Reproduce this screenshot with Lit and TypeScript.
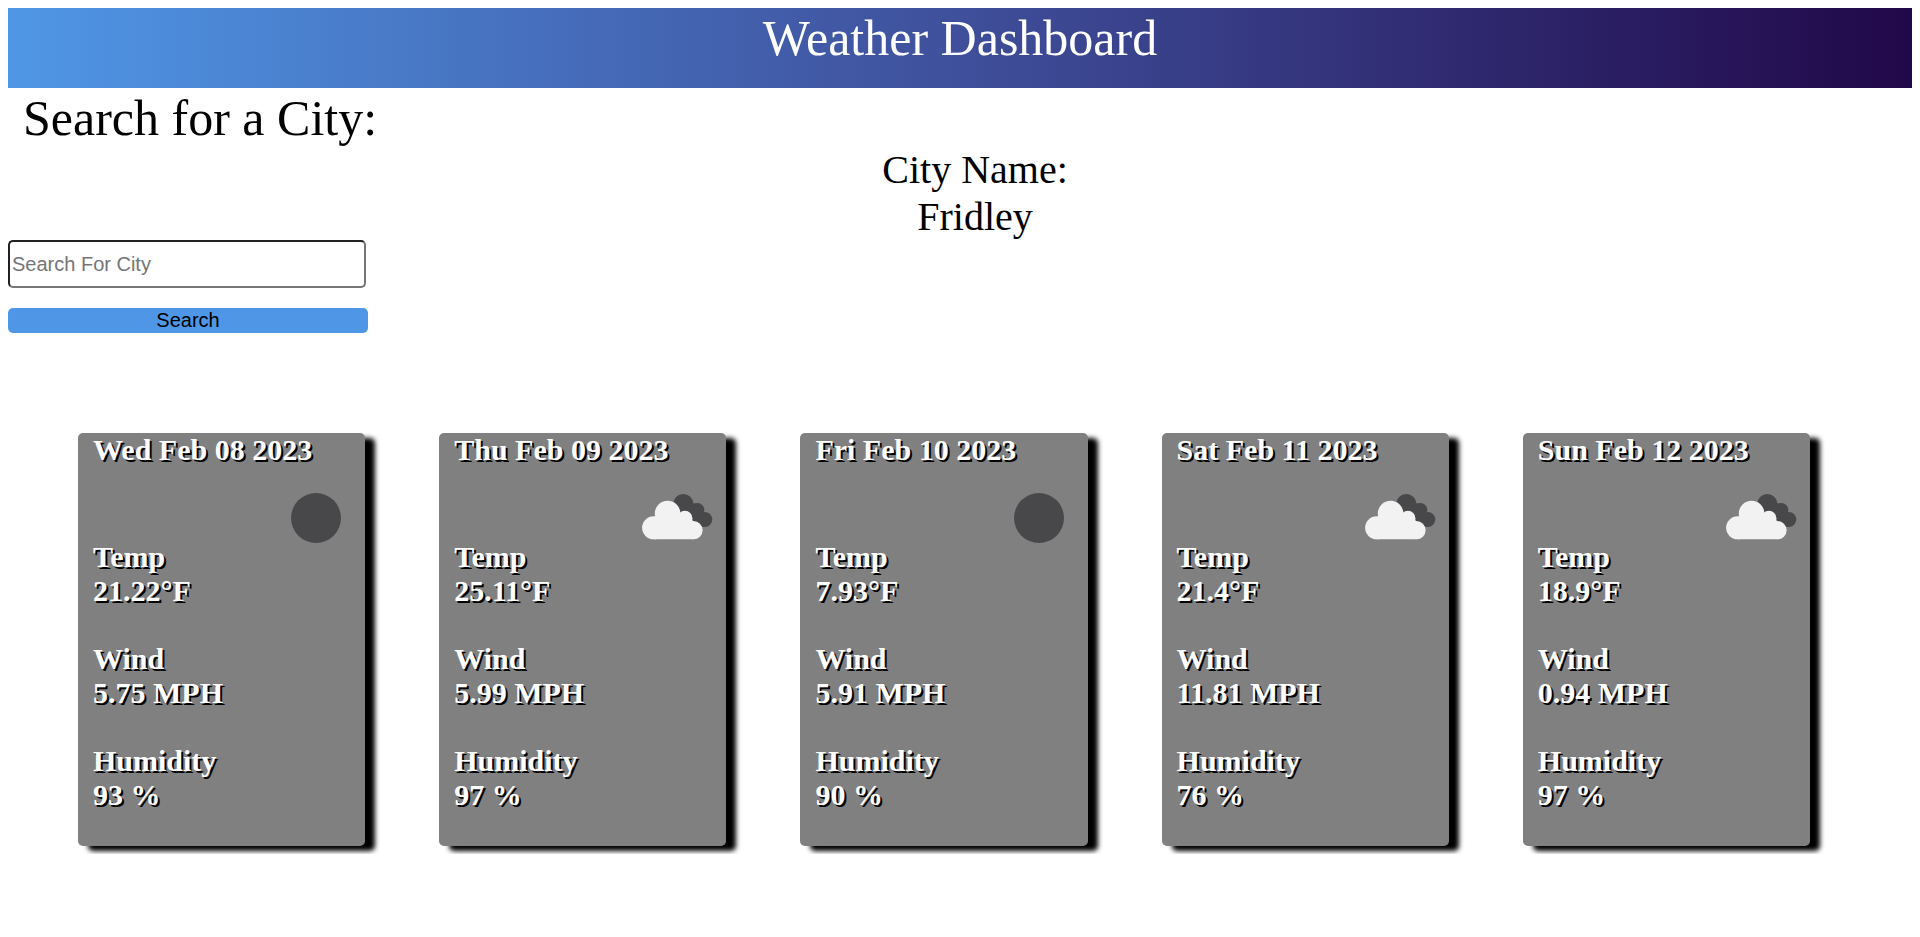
import { LitElement, html, css, svg } from "lit";
import { customElement, property, state } from "lit/decorators.js";

interface Forecast {
  date: string;
  icon: "clear" | "clouds";
  temp: string;
  wind: string;
  humidity: string;
}

const clearNight = svg`<circle cx="51" cy="51" r="25" fill="#48484a" />`;

const brokenClouds = svg`
  <g fill="#48484a">
    <circle cx="57.3" cy="37.3" r="10.2" />
    <circle cx="71.4" cy="43" r="7" />
    <circle cx="78.8" cy="52.5" r="7.5" />
    <path d="M57 31 L66 36 L72 37 L78 45 L79 60 L61 57 Z" />
  </g>
  <g fill="#f2f2f2">
    <circle cx="41.6" cy="46.6" r="12.8" />
    <circle cx="27.6" cy="60.8" r="11.5" />
    <circle cx="58.9" cy="51.4" r="7.6" />
    <circle cx="67.5" cy="63.2" r="9.1" />
    <path d="M27.6 72.3 V56 L29.3 47 H53 L66 52.5 L67.5 55 V72.3 Z" />
  </g>`;

@customElement("forecast-card")
export class ForecastCard extends LitElement {
  @property({ attribute: false }) day!: Forecast;

  static styles = css`
    :host {
      display: block;
      min-width: 0;
      padding: 0 15px 34px;
      border-radius: 5px;
      background: #808080;
      box-shadow: 10px 5px 5px #000;
      color: #fff;
      font-size: 30px;
      font-weight: bold;
      line-height: 34px;
      text-shadow: 2px 2px #000;
    }
    .date {
      margin: 0;
      font-size: inherit;
      white-space: nowrap;
    }
    .icon {
      display: block;
      width: 100px;
      height: 73px;
      margin: 0 -15px 0 auto;
      overflow: visible;
    }
    .readings {
      display: grid;
      gap: 34px;
      margin: 0;
    }
    .value {
      margin: 0;
    }
  `;

  render() {
    const { date, icon, temp, wind, humidity } = this.day;
    const reading = (label: string, value: string) => html`
      <div><dt>${label}</dt><dd class="value">${value}</dd></div>`;
    return html`
      <h3 class="date">${date}</h3>
      <svg class="icon" viewBox="0 0 100 73" aria-hidden="true">
        ${icon === "clear" ? clearNight : brokenClouds}
      </svg>
      <dl class="readings">
        ${reading("Temp", temp)} ${reading("Wind", wind)} ${reading("Humidity", humidity)}
      </dl>`;
  }
}

@customElement("app-root")
export class AppRoot extends LitElement {
  @state() private city = "Fridley";

  @state() private days: Forecast[] = [
    { date: "Wed Feb 08 2023", icon: "clear", temp: "21.22°F", wind: "5.75 MPH", humidity: "93 %" },
    { date: "Thu Feb 09 2023", icon: "clouds", temp: "25.11°F", wind: "5.99 MPH", humidity: "97 %" },
    { date: "Fri Feb 10 2023", icon: "clear", temp: "7.93°F", wind: "5.91 MPH", humidity: "90 %" },
    { date: "Sat Feb 11 2023", icon: "clouds", temp: "21.4°F", wind: "11.81 MPH", humidity: "76 %" },
    { date: "Sun Feb 12 2023", icon: "clouds", temp: "18.9°F", wind: "0.94 MPH", humidity: "97 %" },
  ];

  static styles = css`
    :host {
      display: block;
      padding: 8px;
      font-family: "Liberation Serif", "Times New Roman", serif;
      color: #000;
    }
    .header {
      min-height: 80px;
      background: linear-gradient(to right, #4f97e6, #3f4f9b, #210849);
      color: #fff;
      text-align: center;
    }
    .title,
    .prompt {
      margin: 0;
      font-size: 50px;
      font-weight: normal;
      line-height: 60px;
    }
    .overview {
      display: grid;
      grid-template-columns: 360px 1fr 330px;
    }
    .prompt {
      display: block;
      padding-left: 15px;
      white-space: nowrap;
    }
    .search {
      display: flex;
      flex-direction: column;
    }
    .field {
      box-sizing: border-box;
      height: 48px;
      margin: 92px 2px 20px 0;
      padding: 1px 2px;
      border: 2px inset #767676;
      border-radius: 5px;
      background: #fff;
      font: 20px "Liberation Sans", Arial, sans-serif;
    }
    .field::placeholder {
      color: #757575;
    }
    .submit {
      height: 25px;
      padding: 0;
      border: 0;
      border-radius: 5px;
      background: #4f97e6;
      color: #000;
      font: 20px "Liberation Sans", Arial, sans-serif;
    }
    .city {
      margin: 0;
      padding-top: 58px;
      font-size: 40px;
      font-weight: normal;
      line-height: 47px;
      text-align: center;
    }
    .city-name {
      display: block;
    }
    .forecast {
      display: grid;
      grid-template-columns: repeat(5, 1fr);
      gap: 74px;
      padding: 100px 102px 0 70px;
    }
  `;

  private search(event: SubmitEvent) {
    event.preventDefault();
    const value = new FormData(event.target as HTMLFormElement).get("city");
    if (value) this.city = String(value);
  }

  render() {
    return html`
      <header class="header"><h1 class="title">Weather Dashboard</h1></header>
      <main>
        <div class="overview">
          <form class="search" @submit=${this.search}>
            <label class="prompt" for="city">Search for a City:</label>
            <input class="field" id="city" name="city" type="text" placeholder="Search For City" />
            <button class="submit" type="submit">Search</button>
          </form>
          <h2 class="city">City Name: <span class="city-name">${this.city}</span></h2>
        </div>
        <section class="forecast" aria-label="Five day forecast">
          ${this.days.map((day) => html`<forecast-card .day=${day}></forecast-card>`)}
        </section>
      </main>`;
  }
}
